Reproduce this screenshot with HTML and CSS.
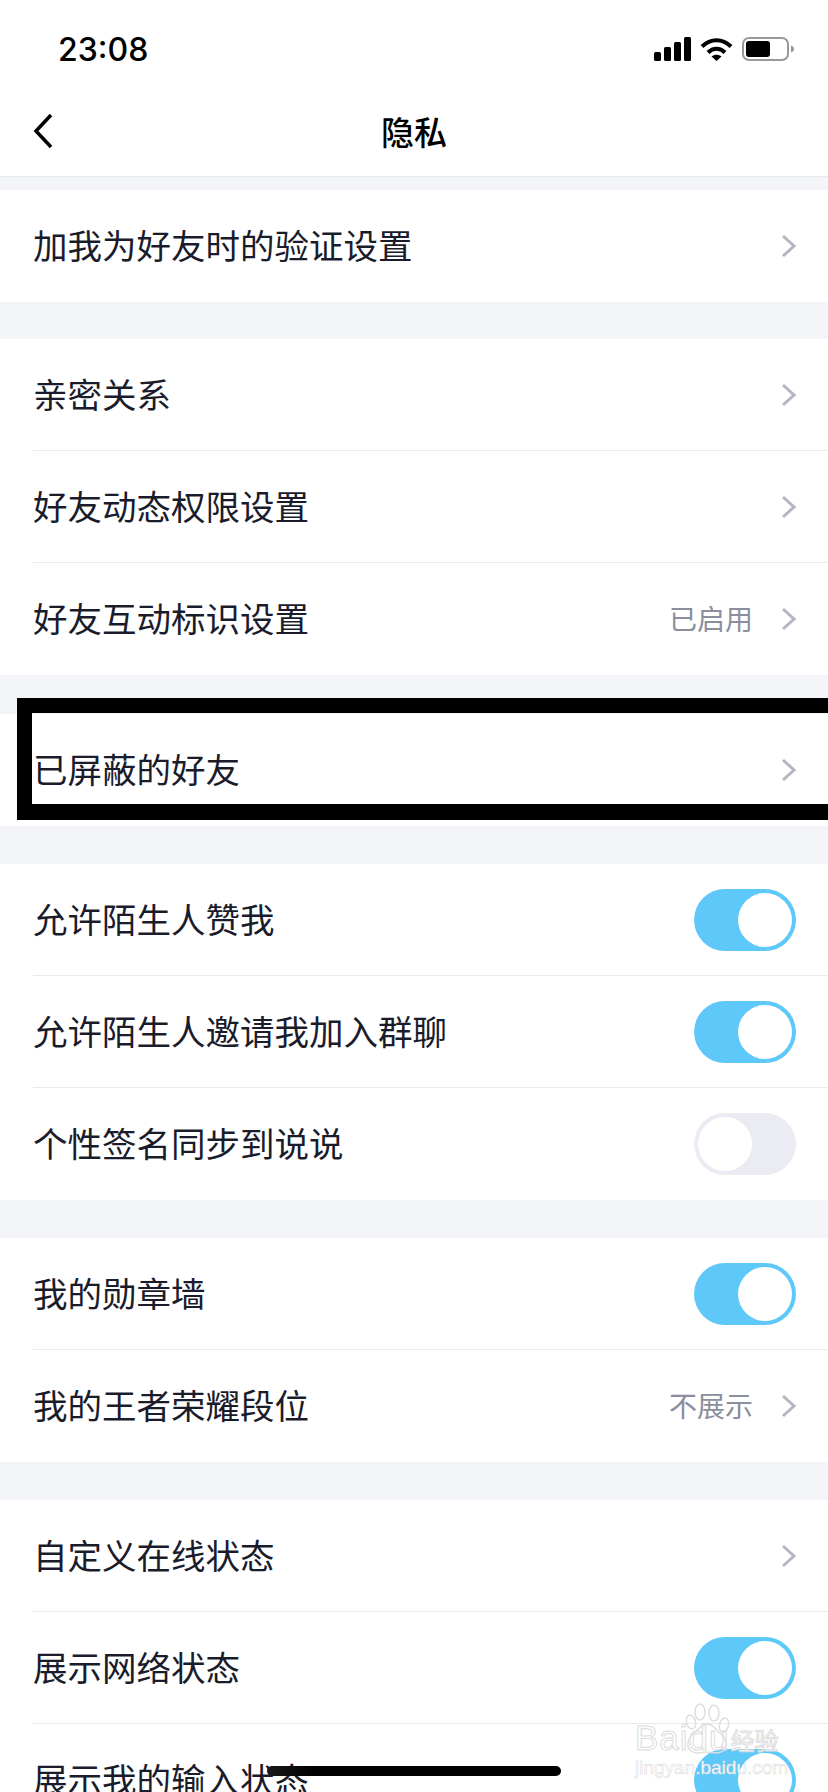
FILE: index.html
```html
<!DOCTYPE html>
<html lang="zh-CN">
<head>
  <meta charset="UTF-8">
  <title>隐私</title>
  <link rel="stylesheet" href="styles.css">
</head>
<body>
  <div class="screen">
    <div class="status">
      <span class="time">23:08</span>
      <div class="status-icons">
        <svg width="37" height="24" viewBox="0 0 37 24"><rect x="0" y="15" width="7" height="9" rx="1.5"/><rect x="10" y="10" width="7" height="14" rx="1.5"/><rect x="20" y="5" width="7" height="19" rx="1.5"/><rect x="30" y="0" width="7" height="24" rx="1.5"/></svg>
        <svg width="33" height="24" viewBox="0 0 33 24" fill="none" stroke="#000" stroke-width="4"><path d="M2 9.5C10.5 1 22.5 1 31 9.5"/><path d="M8 15.500C13 10.500 20 10.500 25 15.500"/><path d="M16.500 24L11.500 19.500C14.500 17 18.500 17 21.500 19.500Z" fill="#000" stroke="none"/></svg>
        <svg class="battery" width="52" height="24" viewBox="0 0 52 24"><rect x="1" y="1" width="45" height="22" rx="6" fill="none" stroke="#999" stroke-width="2"/><rect x="4" y="4" width="24" height="16" rx="3"/><path d="M49 8.500C51 9 52 10.500 52 12C52 13.500 51 15 49 15.500Z" fill="#999"/></svg>
      </div>
    </div>
    <div class="nav">
      <svg class="back" width="20" height="36" viewBox="0 0 20 36"><path d="M18 2L3 18L18 34" fill="none" stroke="#000" stroke-width="3.500"/></svg>
      <h1>隐私</h1>
    </div>

    <div class="group first">
      <div class="row"><span class="name">加我为好友时的验证设置</span><svg class="more" width="15" height="24" viewBox="0 0 15 24"><path d="M2 2L13 12L2 22"/></svg></div>
    </div>

    <div class="group second">
      <div class="row"><span class="name">亲密关系</span><svg class="more" width="15" height="24" viewBox="0 0 15 24"><path d="M2 2L13 12L2 22"/></svg></div>
      <div class="row"><span class="name">好友动态权限设置</span><svg class="more" width="15" height="24" viewBox="0 0 15 24"><path d="M2 2L13 12L2 22"/></svg></div>
      <div class="row"><span class="name">好友互动标识设置</span><span class="val">已启用</span><svg class="more" width="15" height="24" viewBox="0 0 15 24"><path d="M2 2L13 12L2 22"/></svg></div>
    </div>

    <div class="group blocked">
      <div class="row"><span class="name">已屏蔽的好友</span><svg class="more" width="15" height="24" viewBox="0 0 15 24"><path d="M2 2L13 12L2 22"/></svg></div>
    </div>

    <div class="group">
      <div class="row"><span class="name">允许陌生人赞我</span><span class="toggle on"></span></div>
      <div class="row"><span class="name">允许陌生人邀请我加入群聊</span><span class="toggle on"></span></div>
      <div class="row"><span class="name">个性签名同步到说说</span><span class="toggle"></span></div>
    </div>

    <div class="group">
      <div class="row"><span class="name">我的勋章墙</span><span class="toggle on"></span></div>
      <div class="row"><span class="name">我的王者荣耀段位</span><span class="val">不展示</span><svg class="more" width="15" height="24" viewBox="0 0 15 24"><path d="M2 2L13 12L2 22"/></svg></div>
    </div>

    <div class="group">
      <div class="row"><span class="name">自定义在线状态</span><svg class="more" width="15" height="24" viewBox="0 0 15 24"><path d="M2 2L13 12L2 22"/></svg></div>
      <div class="row"><span class="name">展示网络状态</span><span class="toggle on"></span></div>
      <div class="row"><span class="name">展示我的输入状态</span><span class="toggle on"></span></div>
    </div>

    <div class="mark-box"></div>
    <div class="home-bar"></div>
    <div class="watermark">
      <svg class="paw" width="46" height="56" viewBox="0 0 46 56" fill="none" stroke="#dedede" stroke-width="1.5"><ellipse cx="6" cy="19" rx="4.500" ry="7" transform="rotate(-15 6 19)"/><ellipse cx="15" cy="9" rx="5" ry="8"/><ellipse cx="29" cy="10" rx="5" ry="8"/><ellipse cx="39" cy="22" rx="4.500" ry="7" transform="rotate(15 39 22)"/><path d="M22 21C28 21 30 26 35 30C42 36 43 44 38 48C33 52 27 49 22 49C17 49 11 52 6 48C1 44 2 36 9 30C14 26 16 21 22 21Z"/></svg>
      <div class="wm-main"><span>Baidu</span><span class="wm-cn">经验</span></div>
      <div class="wm-url">jingyan.baidu.com</div>
    </div>
  </div>
</body>
</html>
```

FILE: styles.css
```css
html, body {
  margin: 0;
  padding: 0;
}
.screen {
  position: relative;
  width: 828px;
  height: 1792px;
  overflow: hidden;
  background: #f4f5f9;
  font-family: "Noto Sans CJK SC", "Liberation Sans", sans-serif;
  color: #1a1c2b;
}
.status {
  height: 88px;
  background: #fff;
  display: flex;
  align-items: center;
  justify-content: space-between;
  padding: 10px 34px 0 58px;
  box-sizing: border-box;
}
.time {
  font-family: Inter, sans-serif;
  font-size: 32px;
  font-weight: 500;
  color: #000;
}
.status-icons {
  display: flex;
  align-items: center;
  gap: 9px;
}
.nav {
  position: relative;
  height: 88px;
  background: #fff;
  border-bottom: 1px solid #e8e9ee;
  display: flex;
  align-items: center;
  justify-content: center;
}
.back {
  position: absolute;
  left: 33px;
  top: 25px;
}
.nav h1 {
  margin: 0 0 2px;
  font-size: 33px;
  font-weight: 500;
  color: #000;
}
.group {
  margin-top: 38px;
  background: #fff;
}
.group.first {
  margin-top: 13px;
}
.group.second {
  margin-top: 37px;
}
.group.blocked {
  margin-top: 39px;
}
.row {
  height: 112px;
  margin-left: 33px;
  padding-right: 32px;
  display: flex;
  align-items: center;
  box-sizing: border-box;
  border-bottom: 1px solid #e9eaee;
}
.row:last-child {
  border-bottom: none;
}
.name {
  flex: 1;
  font-size: 34.5px;
  padding-bottom: 4px;
}
.val {
  font-size: 28px;
  color: #8b8e9c;
  margin-right: 28px;
  padding-bottom: 2px;
}
.more {
  fill: none;
  stroke: #b4b6c2;
  stroke-width: 3;
}
.toggle {
  width: 102px;
  height: 62px;
  border-radius: 31px;
  background: #ebecf3;
  position: relative;
}
.toggle::after {
  content: "";
  position: absolute;
  left: 4px;
  top: 4px;
  width: 54px;
  height: 54px;
  border-radius: 50%;
  background: #fff;
}
.toggle.on {
  background: #5ec8f8;
}
.toggle.on::after {
  left: 44px;
}
.mark-box {
  position: absolute;
  left: 17px;
  top: 698px;
  right: -20px;
  height: 91px;
  border: solid #000;
  border-width: 15px 0 16px 15px;
}
.home-bar {
  position: absolute;
  left: 267px;
  top: 1766px;
  width: 294px;
  height: 10px;
  border-radius: 5px;
  background: linear-gradient(to right, #1a1a1a, #000 16%);
}
.watermark {
  position: absolute;
  left: 635px;
  top: 1703px;
  width: 150px;
  padding-top: 18px;
  font-family: "Liberation Sans", sans-serif;
  color: #fff;
}
.paw {
  position: absolute;
  left: 50px;
  top: 0;
}
.wm-main {
  font-size: 35px;
  line-height: 34px;
  letter-spacing: 1px;
  white-space: nowrap;
  -webkit-text-stroke: 1px #dcdcdc;
}
.wm-cn {
  font-family: "Noto Sans CJK SC", sans-serif;
  font-size: 24px;
  letter-spacing: 0;
  margin-left: 1px;
}
.wm-url {
  font-size: 19px;
  line-height: 22px;
  white-space: nowrap;
  -webkit-text-stroke: 0.5px #d8d8d8;
}
```
